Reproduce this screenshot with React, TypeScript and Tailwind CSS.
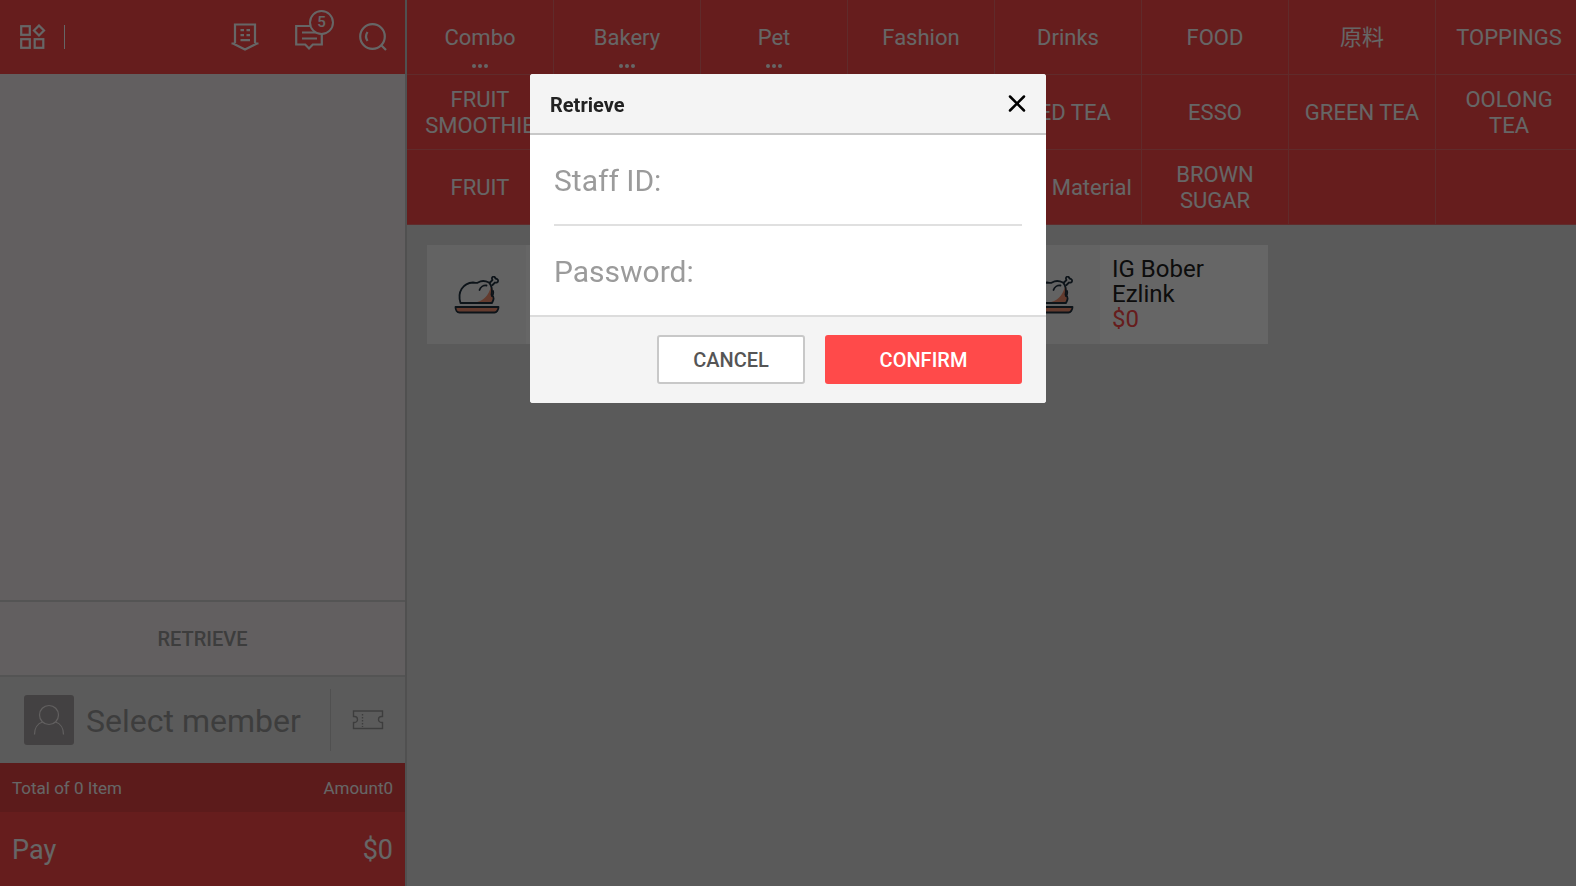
import { useState } from "react";

const categories = [
  { name: "Combo", more: true },
  { name: "Bakery", more: true },
  { name: "Pet", more: true },
  { name: "Fashion" },
  { name: "Drinks" },
  { name: "FOOD" },
  { name: "原料" },
  { name: "TOPPINGS" },
  { name: "FRUIT SMOOTHIE" },
  { name: "" },
  { name: "" },
  { name: "" },
  { name: "RED TEA" },
  { name: "ESSO" },
  { name: "GREEN TEA" },
  { name: "OOLONG TEA" },
  { name: "FRUIT" },
  { name: "" },
  { name: "" },
  { name: "" },
  { name: "Raw Material" },
  { name: "BROWN SUGAR" },
  { name: "" },
  { name: "" },
];

const products = [
  { name: "", price: "" },
  { name: "", price: "" },
  { name: "IG Bober Ezlink", price: "$0" },
];

function GridIcon() {
  return (
    <svg width="26" height="26" viewBox="0 0 26 26" fill="none" stroke="currentColor" strokeWidth="2.200">
      <rect x="1.200" y="2.200" width="8.600" height="8.600" />
      <rect x="1.200" y="15.200" width="8.600" height="8.600" />
      <rect x="14.700" y="15.200" width="8.600" height="8.600" />
      <path d="M19 1.500L24 6.500l-5 5-5-5z" />
    </svg>
  );
}

function ReceiptIcon() {
  return (
    <svg width="28" height="28" viewBox="0 0 28 28" fill="none" stroke="currentColor" strokeWidth="2.200">
      <path d="M4 20V1.500h20V20M.500 20.500H4M24 20.500h3.500M2 20.500l12 6 12-6" />
      <path d="M9.500 7.200H13M15.500 7.200H19M9.500 12.200H13M15.500 12.200H19M9.500 17.200H19" />
    </svg>
  );
}

function MessageIcon() {
  return (
    <svg width="28" height="28" viewBox="0 0 28 28" fill="none" stroke="currentColor" strokeWidth="2.200">
      <path d="M1.200 3h25.600v18.500h-9L14 25.500l-3.800-4h-9z" />
      <path d="M7 9.500h15M7 15.500h15" />
    </svg>
  );
}

function SearchIcon() {
  return (
    <svg width="28" height="28" viewBox="0 0 28 28" fill="none" stroke="currentColor" strokeWidth="2.200">
      <circle cx="13.500" cy="13.500" r="12.300" />
      <path d="M22 22l5 5M8.500 9q-3 4.500 0 9" />
    </svg>
  );
}

function UserIcon() {
  return (
    <svg width="32" height="32" viewBox="0 0 32 32" fill="none" stroke="currentColor" strokeWidth="1.200">
      <circle cx="16" cy="11" r="9.500" />
      <path d="M1.500 30.500c0-6 3-11 8-12.500M30.500 30.500c0-6-3-11-8-12.500" />
    </svg>
  );
}

function CouponIcon() {
  return (
    <svg width="32" height="20" viewBox="0 0 32 20" fill="none" stroke="currentColor" strokeWidth="1.400">
      <path d="M1.500 1h29v5.500h-1a3 3 0 0 0 0 6h1v6h-29v-6h1a3 3 0 0 0 0-6h-1z" />
      <path d="M10.500 4v13" strokeDasharray="1.500 1.500" />
    </svg>
  );
}

function RoastIcon() {
  return (
    <svg width="46" height="38" viewBox="0 0 46 38" fill="none" stroke="#223240" strokeWidth="1.800" strokeLinejoin="round" strokeLinecap="round">
      <path d="M20 27c9-2 15-7 17-17 3 4 1 7 2.500 11L38 27z" fill="#f89574" stroke="none" />
      <path d="M6.500 27C3 16 9 7 19 6.500c3 0 3.500 1 5 0 4-2.500 8-1.500 11 0 3 3 3.500 7 2.500 12.500 3.500 2 2 5 .5 8z" />
      <path d="M25.500 14c1-3 4-5 7-4.500M38 20c1-1 1.500-3 1-5M36 6.500l2.500-2.500c-2-3 2-5 3-1.500 4 .5 3 5-.5 4L38.500 9" />
      <path d="M1.500 31h43c0 3-2 5.500-4 5.500h-35c-2.500 0-4-2.500-4-5.500z" fill="#f89574" />
    </svg>
  );
}

function Sidebar() {
  return (
    <aside className="flex w-[407px] shrink-0 flex-col border-r-2 border-[#c8c8c8] bg-[#f4eeef]">
      <header className="flex h-[74px] items-center bg-[#ff4a4a] pl-5 pr-[18px] text-white">
        <button type="button" aria-label="Menu">
          <GridIcon />
        </button>
        <span className="ml-[18px] h-6 w-px bg-white" />
        <div className="ml-auto flex items-center gap-9">
          <button type="button" aria-label="Orders">
            <ReceiptIcon />
          </button>
          <button type="button" aria-label="Messages" className="relative">
            <MessageIcon />
            <span className="absolute -top-[13px] left-[14px] flex size-[25px] items-center justify-center rounded-full border-2 border-white bg-[#ff4a4a] text-[15px] font-medium">
              5
            </span>
          </button>
          <button type="button" aria-label="Search">
            <SearchIcon />
          </button>
        </div>
      </header>
      <div className="flex-1" />
      <button type="button" className="h-[77px] border-y-2 border-[#d2d2d2] text-[20px] font-medium text-[#999]">
        RETRIEVE
      </button>
      <div className="flex h-[86px] items-center bg-[#e4e4e4] pl-6">
        <button type="button" className="flex flex-1 items-center gap-3 text-[32px] text-[#999]">
          <span className="flex size-[50px] items-center justify-center rounded-[3px] bg-[#a8a4a5] text-[#f4eeef]">
            <UserIcon />
          </span>
          <span className="pt-[2px]">Select member</span>
        </button>
        <button type="button" aria-label="Coupons" className="flex h-[62px] w-[75px] items-center justify-center border-l border-[#c8c8c8] text-[#999]">
          <CouponIcon />
        </button>
      </div>
      <div className="flex h-[49px] items-center justify-between bg-[#e64444] px-3 pt-[2px] text-[17px] text-white">
        <span>Total of 0 Item</span>
        <span>Amount0</span>
      </div>
      <button type="button" className="flex h-[74px] items-center justify-between bg-[#ff4a4a] px-3 pt-[3px] text-[27px] text-white">
        <span>Pay</span>
        <span>$0</span>
      </button>
    </aside>
  );
}

function Catalog() {
  return (
    <main className="min-w-0 flex-1 overflow-hidden">
      <nav className="grid auto-rows-[75px] grid-cols-[repeat(8,147px)] bg-[#ff4a4a] text-[22px] leading-[26px] text-white">
        {categories.map((c, i) => (
          <button key={i} type="button" className="relative border-b border-r border-[#f06c6c] px-2 pt-[2px]">
            {c.name}
            {c.more && (
              <span className="absolute inset-x-0 bottom-[6px] flex justify-center gap-[2px]">
                <span className="size-1 rounded-full bg-white" />
                <span className="size-1 rounded-full bg-white" />
                <span className="size-1 rounded-full bg-white" />
              </span>
            )}
          </button>
        ))}
      </nav>
      <div className="flex gap-5 p-5">
        {products.map((p, i) => (
          <button key={i} type="button" className="flex h-[99px] w-[267px] bg-white text-left">
            <span className="flex h-full w-[99px] items-center justify-center bg-[#f8f8f8]">
              <RoastIcon />
            </span>
            <span className="flex-1 self-center pl-3 text-[24px] leading-[25px] text-[#222]">
              {p.name}
              <span className="block text-[#ff4a4a]">{p.price}</span>
            </span>
          </button>
        ))}
      </div>
    </main>
  );
}

function RetrieveDialog() {
  const [staffId, setStaffId] = useState("");
  const [password, setPassword] = useState("");
  const field = "block w-full bg-transparent pt-[2px] text-[30px] text-[#222] outline-none placeholder:text-[#9b9b9b]";

  return (
    <form role="dialog" aria-label="Retrieve" className="w-[516px] overflow-hidden rounded-[3px] bg-white">
      <div className="flex h-[61px] items-center justify-between border-b-2 border-[#c8c8c8] bg-[#f4f4f4] px-5">
        <h2 className="pt-[2px] text-[20px] font-bold text-[#222]">Retrieve</h2>
        <button type="button" aria-label="Close">
          <svg width="18" height="18" viewBox="0 0 18 18" stroke="#000" strokeWidth="2.500" strokeLinecap="round">
            <path d="M2 1.500l14 14M16 1.500l-14 14" />
          </svg>
        </button>
      </div>
      <div className="px-6">
        <input
          aria-label="Staff ID"
          placeholder="Staff ID:"
          value={staffId}
          onChange={(e) => setStaffId(e.target.value)}
          className={`${field} h-[91px] border-b-2 border-[#e0e0e0]`}
        />
        <input
          type="password"
          aria-label="Password"
          placeholder="Password:"
          value={password}
          onChange={(e) => setPassword(e.target.value)}
          className={`${field} h-[89px]`}
        />
      </div>
      <div className="flex justify-end gap-5 border-t-2 border-[#dcdcdc] bg-[#f4f4f4] px-6 pt-[18px] pb-[19px] text-[20px] font-medium">
        <button type="button" className="h-[49px] w-[148px] rounded-[3px] border-2 border-[#c8c8c8] bg-white text-[#555]">
          CANCEL
        </button>
        <button type="button" className="h-[49px] w-[197px] rounded-[3px] bg-[#ff4a4a] text-white">
          CONFIRM
        </button>
      </div>
    </form>
  );
}

export default function App() {
  return (
    <div className="flex h-screen overflow-hidden bg-[#e1e1e1] font-[Roboto,'Noto_Sans_CJK_SC',sans-serif]">
      <Sidebar />
      <Catalog />
      <div className="fixed inset-0 flex items-start justify-center bg-black/60 pt-[74px]">
        <RetrieveDialog />
      </div>
    </div>
  );
}
